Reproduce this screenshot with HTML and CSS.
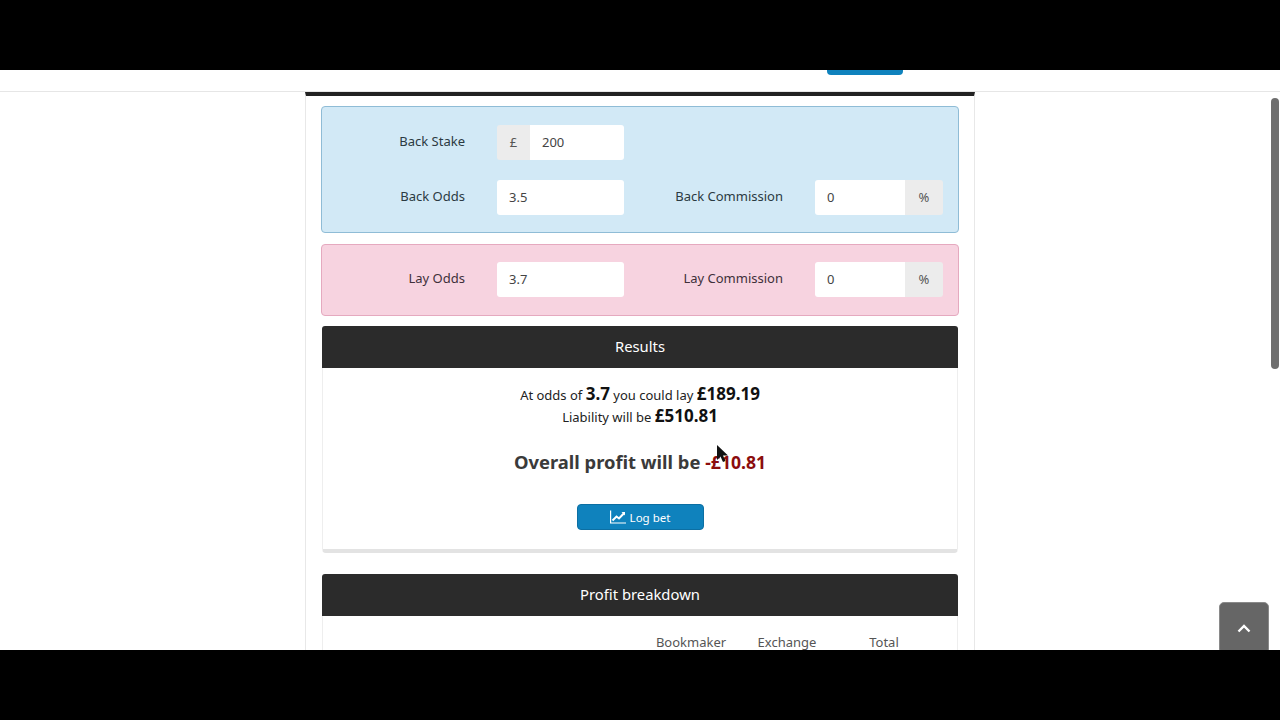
FILE: index.html
```html
<!DOCTYPE html>
<html lang="en">
<head>
    <meta charset="UTF-8">
    <title>Matched Betting Calculator</title>
    <link rel="stylesheet" href="styles.css">
</head>
<body>
    <div class="screen">
        <div class="topbar">
            <div class="topbar-inner"><span class="topbar-btn"></span></div>
        </div>
        <div class="page">
            <div class="panel panel-back">
                <div class="row">
                    <label class="label">Back Stake</label>
                    <div class="group">
                        <span class="addon">£</span>
                        <span class="input input-stake">200</span>
                    </div>
                </div>
                <div class="row">
                    <label class="label">Back Odds</label>
                    <div class="group"><span class="input input-wide">3.5</span></div>
                    <label class="label label-right">Back Commission</label>
                    <div class="group">
                        <span class="input input-short">0</span>
                        <span class="addon addon-right">%</span>
                    </div>
                </div>
            </div>
            <div class="panel panel-lay">
                <div class="row">
                    <label class="label">Lay Odds</label>
                    <div class="group"><span class="input input-wide">3.7</span></div>
                    <label class="label label-right">Lay Commission</label>
                    <div class="group">
                        <span class="input input-short">0</span>
                        <span class="addon addon-right">%</span>
                    </div>
                </div>
            </div>
            <div class="card">
                <div class="card-title">Results</div>
                <div class="card-body results">
                    <p class="line">At odds of <b>3.7</b> you could lay <b>£189.19</b></p>
                    <p class="line">Liability will be <b>£510.81</b></p>
                    <p class="overall">Overall profit will be <span class="loss">-£10.81</span></p>
                    <button class="log-btn">
                        <svg class="log-icon" viewBox="0 0 16 14" width="16" height="14">
                            <path d="M0.6 0.5V13H16" fill="none" stroke="#fff" stroke-width="1.2"/>
                            <path d="M2.5 10.5L6.5 6.5L9 8.5L14 3.2" fill="none" stroke="#fff" stroke-width="2"/>
                            <path d="M11.5 2H15V5.5Z" fill="#fff"/>
                        </svg>
                        Log bet
                    </button>
                </div>
            </div>
            <div class="card">
                <div class="card-title">Profit breakdown</div>
                <div class="card-body breakdown">
                    <span class="col col-book">Bookmaker</span>
                    <span class="col col-exch">Exchange</span>
                    <span class="col col-total">Total</span>
                </div>
            </div>
        </div>
        <div class="scrollbar"><div class="scroll-thumb"></div></div>
        <a class="to-top">
            <svg viewBox="0 0 14 9" width="14" height="9">
                <path d="M1.5 7.5L7 2L12.5 7.5" fill="none" stroke="#fff" stroke-width="2.4"/>
            </svg>
        </a>
        <svg class="cursor" viewBox="0 0 12 18" width="12" height="18">
            <path d="M1 0V15L4.5 11.5L7 17L9.5 16L7 10.5H12Z" fill="#111"/>
        </svg>
    </div>
</body>
</html>
```
FILE: styles.css
```css
html, body {
    margin: 0;
    height: 720px;
    overflow: hidden;
}
body {
    background: #000;
    padding: 70px 0;
    box-sizing: border-box;
    font-family: "Noto Sans", "Liberation Sans", sans-serif;
    font-size: 13px;
    color: #333;
}
.screen {
    position: relative;
    height: 580px;
    background: #fff;
    overflow: hidden;
}
.topbar {
    height: 21px;
    border-bottom: 1px solid #e6e6e6;
}
.topbar-inner {
    width: 670px;
    margin: 0 auto;
    display: flex;
    justify-content: flex-end;
    padding-right: 72px;
    box-sizing: border-box;
}
.topbar-btn {
    width: 76px;
    height: 5px;
    background: #0f82bd;
    border-radius: 0 0 4px 4px;
}
.page {
    width: 670px;
    height: 580px;
    margin: 0 auto;
    box-sizing: border-box;
    border: 1px solid #e8e8e8;
    border-width: 0 1px;
    border-top: 4px solid #222;
    padding: 10px 15px 0;
}
.panel {
    border: 1px solid #8fbcd6;
    border-radius: 4px;
    padding: 17px 15px 16px 0;
    margin-bottom: 11px;
}
.panel-back {
    background: #d2e9f6;
    height: 127px;
    box-sizing: border-box;
}
.panel-lay {
    background: #f7d3e0;
    border-color: #e5a9bf;
    height: 72px;
    box-sizing: border-box;
    padding-top: 16px;
    margin-bottom: 10px;
}
.row {
    display: flex;
    align-items: center;
    height: 36px;
    margin-bottom: 19px;
}
.label {
    flex: none;
    width: 143px;
    text-align: right;
    margin-right: 32px;
    padding-bottom: 3px;
    font-size: 13px;
    color: #2b3a42;
}
.panel-lay .label {
    color: #40303a;
}
.label-right {
    width: 159px;
}
.group {
    flex: none;
    display: flex;
    height: 35px;
}
.input {
    background: #fff;
    line-height: 34px;
    padding-left: 12px;
    box-sizing: border-box;
    font-size: 13px;
    color: #444;
}
.input-stake {
    width: 94px;
    border-radius: 0 3px 3px 0;
}
.input-short {
    width: 90px;
    border-radius: 3px 0 0 3px;
}
.input-wide {
    width: 127px;
    border-radius: 3px;
}
.addon {
    width: 33px;
    background: #ececec;
    line-height: 34px;
    text-align: center;
    color: #555;
    border-radius: 3px 0 0 3px;
}
.addon-right {
    width: 38px;
    border-radius: 0 3px 3px 0;
}
.card {
    margin: 0 1px 21px;
}
.card-title {
    height: 42px;
    line-height: 40px;
    background: #2b2b2b;
    color: #fff;
    text-align: center;
    font-size: 14.8px;
    border-radius: 3px 3px 0 0;
}
.card-body {
    border: 1px solid #eee;
    border-width: 0 1px;
}
.results {
    height: 185px;
    box-sizing: border-box;
    border-bottom: 4px solid #e3e3e3;
    border-radius: 0 0 4px 4px;
    text-align: center;
    padding-top: 15px;
}
.line {
    margin: 0;
    height: 22px;
    line-height: 22px;
    color: #222;
}
.line b {
    font-size: 17px;
    color: #111;
}
.overall {
    margin: 21px 0 0;
    font-size: 18.4px;
    font-weight: bold;
    line-height: 28px;
    color: #3a3a3a;
}
.loss {
    font-size: 17.6px;
    color: #8b0d0d;
}
.log-btn {
    display: flex;
    align-items: center;
    justify-content: center;
    gap: 4px;
    width: 127px;
    height: 26px;
    margin: 28px auto 0;
    padding: 0;
    border: 1px solid #0c6fa3;
    border-radius: 4px;
    background: #0f82bd;
    color: #fff;
    font-family: inherit;
    font-size: 11.5px;
}
.breakdown {
    position: relative;
    height: 60px;
}
.col {
    position: absolute;
    top: 17px;
    color: #555;
    transform: translateX(-50%);
}
.col-book { left: 368px; }
.col-exch { left: 464px; }
.col-total { left: 561px; }
.scrollbar {
    position: absolute;
    top: 22px;
    right: 0;
    bottom: 0;
    width: 17px;
    background: #fff;
}
.scroll-thumb {
    position: absolute;
    top: 6px;
    left: 8px;
    width: 8px;
    height: 271px;
    background: #6e6e6e;
    border-radius: 4px;
}
.to-top {
    position: absolute;
    right: 11px;
    bottom: -4px;
    display: flex;
    justify-content: center;
    padding-top: 21px;
    box-sizing: border-box;
    width: 50px;
    height: 52px;
    background: #666;
    border: 1px solid #8a8a8a;
    border-radius: 5px;
}
.to-top svg {
    display: block;
}
.cursor {
    position: absolute;
    left: 716px;
    top: 375px;
}
```
